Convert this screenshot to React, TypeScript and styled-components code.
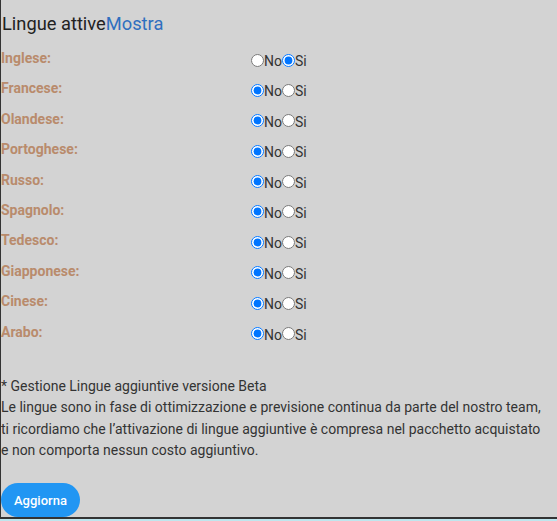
import React, { useState } from "react";
import styled, { createGlobalStyle } from "styled-components";

const Global = createGlobalStyle`
  html, body { margin: 0; padding: 0; background: #bfe6ee; }
  body { font-family: Roboto, "Liberation Sans", Arial, sans-serif; }
  * { box-sizing: border-box; }
`;

const Panel = styled.div`
  height: 519px;
  background: #d3d3d3;
  border-left: 1px solid #333;
  border-bottom: 2px solid #333;
  padding-top: 12px;
  display: flex;
  flex-direction: column;
`;

const Heading = styled.h3`
  margin: 0 0 13px 1px;
  font-size: 18.3px;
  font-weight: 400;
  line-height: 24px;
  color: #222;
`;

const ShowLink = styled.a`
  color: #2f6fbf;
  text-decoration: none;
`;

const LangTable = styled.div`
  display: grid;
  grid-template-columns: 250px auto;
  grid-auto-rows: 30.4px;
`;

const LangLabel = styled.div`
  font-size: 14px;
  font-weight: 700;
  color: #b98b6c;
  line-height: 18px;
`;

const Choices = styled.div`
  display: flex;
  align-items: center;
  height: 20px;
  padding-top: 2px;
  font-size: 14px;
  color: #333;
`;

const Radio = styled.input.attrs({ type: "radio" })`
  margin: 0;
  width: 13px;
  height: 13px;
`;

const ChoiceText = styled.span`
  line-height: 16px;
  padding-top: 2px;
`;

const Notes = styled.div`
  margin-top: 23px;
  font-size: 14px;
  line-height: 21.33px;
  color: #333;
`;

const Button = styled.button`
  margin-top: 22px;
  align-self: flex-start;
  height: 35px;
  padding: 0 13px;
  border: none;
  border-radius: 18px;
  background: #2196f3;
  color: #fff;
  font-family: Roboto, "Liberation Sans", Arial, sans-serif;
  font-size: 13px;
  font-weight: 500;
`;

const langs = [
  ["Inglese", "si"],
  ["Francese", "no"],
  ["Olandese", "no"],
  ["Portoghese", "no"],
  ["Russo", "no"],
  ["Spagnolo", "no"],
  ["Tedesco", "no"],
  ["Giapponese", "no"],
  ["Cinese", "no"],
  ["Arabo", "no"],
];

export default function App() {
  const [vals, setVals] = useState<Record<string, string>>(
    Object.fromEntries(langs.map(([l, v]) => [l, v]))
  );
  return (
    <>
      <Global />
      <Panel>
        <Heading>
          Lingue attive<ShowLink href="#">Mostra</ShowLink>
        </Heading>
        <LangTable>
          {langs.map(([l]) => (
            <React.Fragment key={l}>
              <LangLabel>{l}:</LangLabel>
              <Choices>
                <Radio
                  name={l}
                  checked={vals[l] === "no"}
                  onChange={() => setVals({ ...vals, [l]: "no" })}
                />
                <ChoiceText>No</ChoiceText>
                <Radio
                  name={l}
                  checked={vals[l] === "si"}
                  onChange={() => setVals({ ...vals, [l]: "si" })}
                />
                <ChoiceText>Si</ChoiceText>
              </Choices>
            </React.Fragment>
          ))}
        </LangTable>
        <Notes>
          * Gestione Lingue aggiuntive versione Beta
          <br />
          Le lingue sono in fase di ottimizzazione e previsione continua da parte del nostro team,
          <br />
          ti ricordiamo che l’attivazione di lingue aggiuntive è compresa nel pacchetto acquistato
          <br />e non comporta nessun costo aggiuntivo.
        </Notes>
        <Button>Aggiorna</Button>
      </Panel>
    </>
  );
}
